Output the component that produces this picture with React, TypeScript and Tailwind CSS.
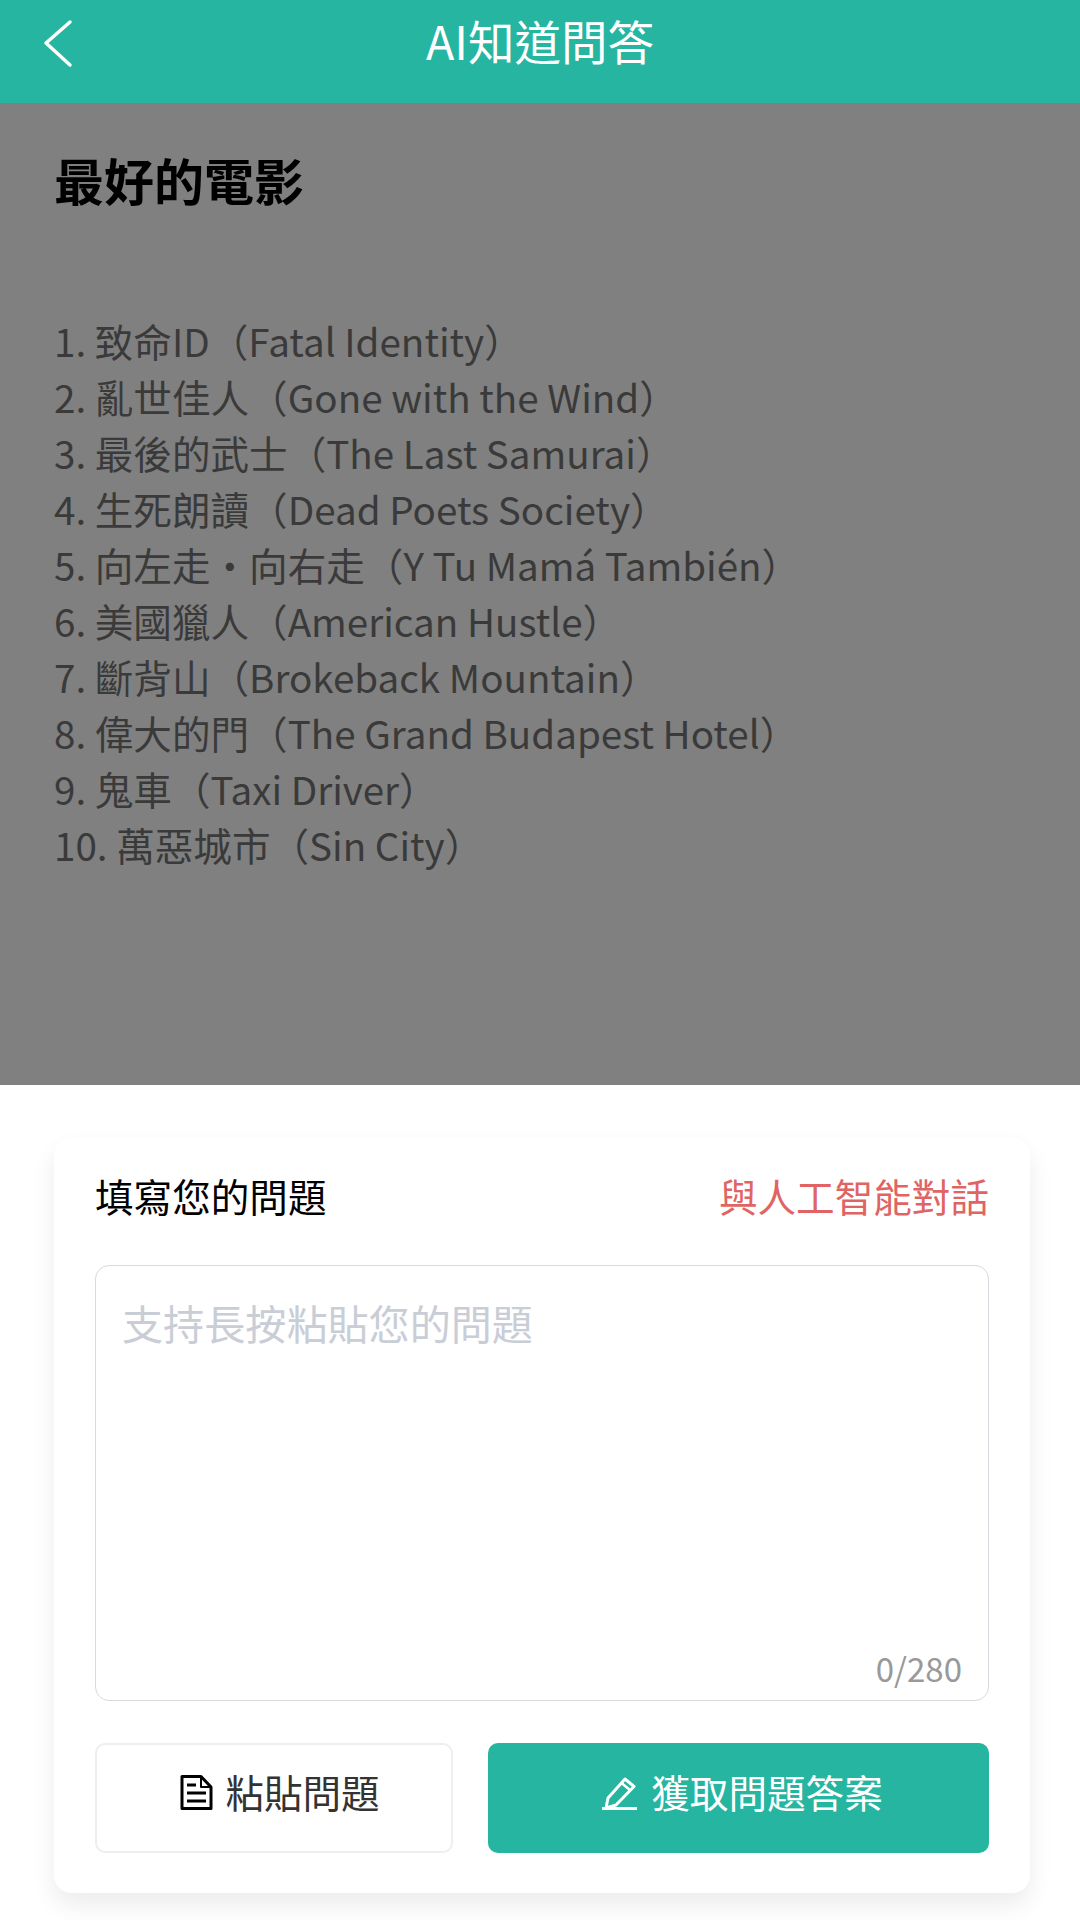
import React from 'react';

const movies = [
  '1. 致命ID（Fatal Identity）',
  '2. 亂世佳人（Gone with the Wind）',
  '3. 最後的武士（The Last Samurai）',
  '4. 生死朗讀（Dead Poets Society）',
  '5. 向左走・向右走（Y Tu Mamá También）',
  '6. 美國獵人（American Hustle）',
  '7. 斷背山（Brokeback Mountain）',
  '8. 偉大的門（The Grand Budapest Hotel）',
  '9. 鬼車（Taxi Driver）',
  '10. 萬惡城市（Sin City）',
];

const BackIcon = () => (
  <svg width="34" height="52" viewBox="0 0 34 52" fill="none" stroke="white" strokeWidth="3.5" strokeLinecap="round" strokeLinejoin="round" className="absolute left-[41px] top-[18px]">
    <path d="M29 4L5 25l24 22" />
  </svg>
);

const DocIcon = () => (
  <svg width="33" height="37" viewBox="0 0 33 37" fill="none" stroke="black" strokeWidth="3" strokeLinejoin="round">
    <path d="M2 2.5h19L31 13v21.5H2z" />
    <path d="M21 2.5V13h10" strokeWidth="2" />
    <path d="M7 11h9M7 19h19M7 27h19" />
  </svg>
);

const PenIcon = () => (
  <svg width="40" height="36" viewBox="0 0 40 36" fill="none" stroke="white" strokeWidth="3">
    <path d="M3 34.5h35" />
    <path d="M26 5l9 7.5L17 31l-10 3 2-10z" strokeLinejoin="round" />
    <path d="M22.5 9l9 7.5" strokeWidth="2.5" />
  </svg>
);

export default function App() {
  return (
    <div className="w-[1080px] h-[1920px] flex flex-col bg-white font-['Noto_Sans_CJK_TC','Noto_Sans',sans-serif] overflow-hidden">
      {/* Header */}
      <header className="relative h-[103px] shrink-0 bg-[#26b5a0] flex justify-center">
        <BackIcon />
        <h1 className="text-[46.5px] leading-[80px] font-normal text-white">AI知道問答</h1>
      </header>

      {/* Answer */}
      <main className="h-[982px] shrink-0 bg-[#808080] pl-[54px] pt-[48px]">
        <h2 className="text-[50px] leading-[56px] font-bold text-black">最好的電影</h2>
        <ol className="mt-[105px] text-[38.6px] leading-[56px] text-[#3a3a3a]">
          {movies.map((m) => (
            <li key={m}>{m}</li>
          ))}
        </ol>
      </main>

      {/* Question form */}
      <section className="pl-[54px] pr-[50px] pt-[53px]">
        <div className="h-[755px] rounded-[18px] bg-white shadow-[0_12px_24px_rgba(0,0,0,0.08)] px-[41px] pt-[29px]">
          <div className="flex justify-between items-center h-[56px] text-[38.6px] leading-[56px]">
            <span className="text-black">填寫您的問題</span>
            <span className="text-[#e06464]">與人工智能對話</span>
          </div>
          <div className="relative mt-[42px] h-[436px] rounded-[14px] border border-[#d8d9de]">
            <textarea
              readOnly
              placeholder="支持長按粘貼您的問題"
              className="w-full h-full resize-none bg-transparent outline-none px-[26px] pt-[27px] text-[41.1px] leading-[58px] placeholder:text-[#c9cdd6]"
            />
            <span className="absolute right-[26px] bottom-[9px] text-[33px] leading-[46px] text-[#999999]">0/280</span>
          </div>
          <div className="flex gap-[35px] mt-[42px] h-[110px]">
            <button className="w-[358px] rounded-[10px] border-2 border-[#eeeef2] flex items-center justify-center gap-[12px] pl-[12px] pb-[12px] text-[38.6px] text-[#333333]">
              <DocIcon />
              粘貼問題
            </button>
            <button className="flex-1 rounded-[10px] bg-[#26b5a0] flex items-center justify-center gap-[12px] pl-[5px] pb-[12px] text-[38.6px] text-white">
              <PenIcon />
              獲取問題答案
            </button>
          </div>
        </div>
      </section>
    </div>
  );
}
